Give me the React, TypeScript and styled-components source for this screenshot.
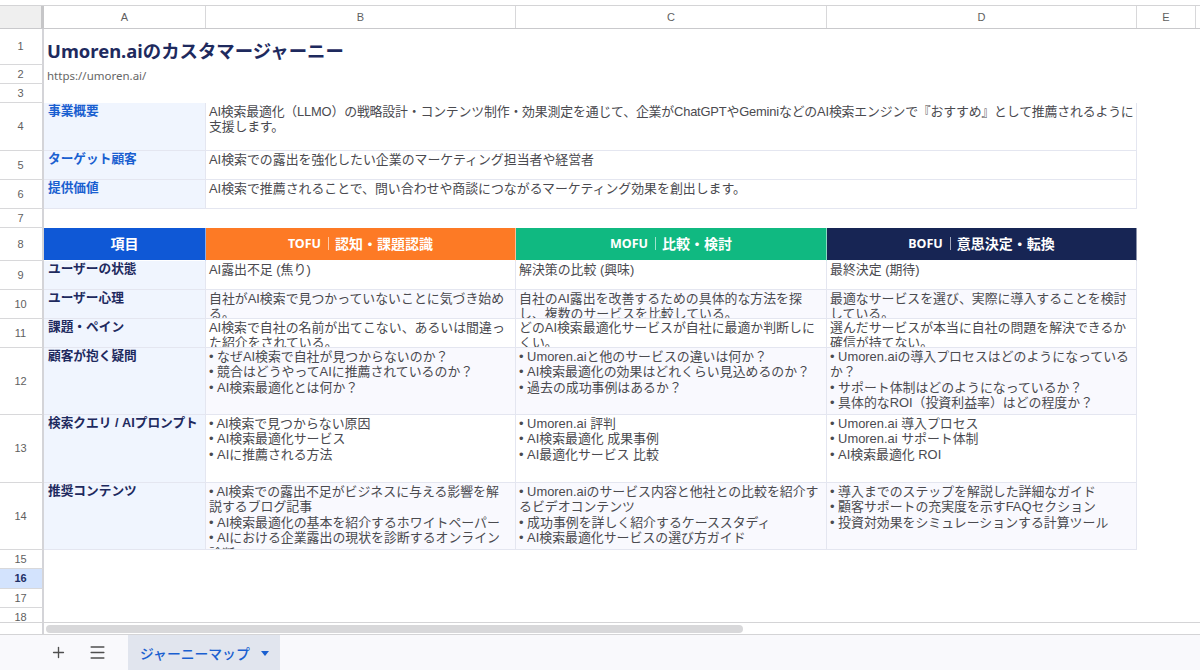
import { Plus, Menu } from 'lucide-react';
import styled, { createGlobalStyle } from 'styled-components';

const COLUMNS = '44px 162px 310px 311px 310px 59px 1fr';

const GlobalStyle = createGlobalStyle`
	html,
	body {
		margin: 0;
		padding: 0;
		background: #fff;
	}
	* {
		box-sizing: border-box;
	}
`;

type RowData = {
	num: number;
	label: string;
	cells: string[];
	height: number;
	tint?: boolean;
	tight?: boolean;
};

const topRows: RowData[] = [
	{
		num: 4,
		label: '事業概要',
		cells: [
			'AI検索最適化（LLMO）の戦略設計・コンテンツ制作・効果測定を通じて、企業がChatGPTやGeminiなどのAI検索エンジンで『おすすめ』として推薦されるように支援します。',
		],
		height: 48,
		tight: true,
	},
	{
		num: 5,
		label: 'ターゲット顧客',
		cells: ['AI検索での露出を強化したい企業のマーケティング担当者や経営者'],
		height: 29,
	},
	{
		num: 6,
		label: '提供価値',
		cells: ['AI検索で推薦されることで、問い合わせや商談につながるマーケティング効果を創出します。'],
		height: 29,
	},
];

const stages = [
	{ name: 'TOFU', title: '認知・課題認識', color: '#fd7a25' },
	{ name: 'MOFU', title: '比較・検討', color: '#10b981' },
	{ name: 'BOFU', title: '意思決定・転換', color: '#172554' },
];

const mapRows: RowData[] = [
	{
		num: 9,
		label: 'ユーザーの状態',
		cells: ['AI露出不足 (焦り)', '解決策の比較 (興味)', '最終決定 (期待)'],
		height: 29,
	},
	{
		num: 10,
		label: 'ユーザー心理',
		cells: [
			'自社がAI検索で見つかっていないことに気づき始める。',
			'自社のAI露出を改善するための具体的な方法を探し、複数のサービスを比較している。',
			'最適なサービスを選び、実際に導入することを検討している。',
		],
		height: 29,
		tint: true,
	},
	{
		num: 11,
		label: '課題・ペイン',
		cells: [
			'AI検索で自社の名前が出てこない、あるいは間違った紹介をされている。',
			'どのAI検索最適化サービスが自社に最適か判断しにくい。',
			'選んだサービスが本当に自社の問題を解決できるか確信が持てない。',
		],
		height: 29,
	},
	{
		num: 12,
		label: '顧客が抱く疑問',
		cells: [
			'• なぜAI検索で自社が見つからないのか？\n• 競合はどうやってAIに推薦されているのか？\n• AI検索最適化とは何か？',
			'• Umoren.aiと他のサービスの違いは何か？\n• AI検索最適化の効果はどれくらい見込めるのか？\n• 過去の成功事例はあるか？',
			'• Umoren.aiの導入プロセスはどのようになっているか？\n• サポート体制はどのようになっているか？\n• 具体的なROI（投資利益率）はどの程度か？',
		],
		height: 67,
		tint: true,
	},
	{
		num: 13,
		label: '検索クエリ / AIプロンプト',
		cells: [
			'• AI検索で見つからない原因\n• AI検索最適化サービス\n• AIに推薦される方法',
			'• Umoren.ai 評判\n• AI検索最適化 成果事例\n• AI最適化サービス 比較',
			'• Umoren.ai 導入プロセス\n• Umoren.ai サポート体制\n• AI検索最適化 ROI',
		],
		height: 68,
	},
	{
		num: 14,
		label: '推奨コンテンツ',
		cells: [
			'• AI検索での露出不足がビジネスに与える影響を解説するブログ記事\n• AI検索最適化の基本を紹介するホワイトペーパー\n• AIにおける企業露出の現状を診断するオンライン診断ツール',
			'• Umoren.aiのサービス内容と他社との比較を紹介するビデオコンテンツ\n• 成功事例を詳しく紹介するケーススタディ\n• AI検索最適化サービスの選び方ガイド',
			'• 導入までのステップを解説した詳細なガイド\n• 顧客サポートの充実度を示すFAQセクション\n• 投資対効果をシミュレーションする計算ツール',
		],
		height: 67,
		tint: true,
	},
];

export default function App() {
	return (
		<Page>
			<GlobalStyle />
			<TopStrip />
			<ColumnHeader>
				<Corner />
				{['A', 'B', 'C', 'D', 'E'].map((c) => (
					<ColumnName key={c}>{c}</ColumnName>
				))}
			</ColumnHeader>

			<Sheet>
				<Row $height={36}>
					<RowNumber>1</RowNumber>
					<Title>Umoren.aiのカスタマージャーニー</Title>
				</Row>
				<Row $height={19}>
					<RowNumber>2</RowNumber>
					<Url>https://umoren.ai/</Url>
				</Row>
				<Row $height={19}>
					<RowNumber>3</RowNumber>
				</Row>

				{topRows.map((row) => (
					<Row key={row.num} $height={row.height}>
						<RowNumber>{row.num}</RowNumber>
						<LabelCell $blue>{row.label}</LabelCell>
						<TextCell $span={3} $tight={row.tight}>
							{row.cells[0]}
						</TextCell>
					</Row>
				))}

				<Row $height={19}>
					<RowNumber>7</RowNumber>
				</Row>

				<Row $height={33}>
					<RowNumber>8</RowNumber>
					<HeadCell $color="#0f58d6">項目</HeadCell>
					{stages.map((stage) => (
						<HeadCell key={stage.name} $color={stage.color}>
							<StageName>{stage.name}</StageName>
							<StageBar />
							{stage.title}
						</HeadCell>
					))}
				</Row>

				{mapRows.map((row) => (
					<Row key={row.num} $height={row.height}>
						<RowNumber>{row.num}</RowNumber>
						<LabelCell>{row.label}</LabelCell>
						{row.cells.map((text, i) => (
							<TextCell key={i} $tint={row.tint}>
								{text}
							</TextCell>
						))}
					</Row>
				))}

				<Row $height={19}>
					<RowNumber>15</RowNumber>
				</Row>
				<Row $height={20}>
					<RowNumber $active>16</RowNumber>
				</Row>
				<Row $height={19}>
					<RowNumber>17</RowNumber>
				</Row>
				<Row $height={19}>
					<RowNumber>18</RowNumber>
				</Row>
			</Sheet>

			<ScrollRow>
				<ScrollGutter />
				<ScrollThumb />
			</ScrollRow>

			<TabBar>
				<TabIcon>
					<Plus size={17} strokeWidth={1.9} />
				</TabIcon>
				<TabIcon>
					<Menu size={19} strokeWidth={1.9} />
				</TabIcon>
				<Tab>
					ジャーニーマップ
					<Caret width="8" height="5" viewBox="0 0 8 5">
						<path d="M0 0h8L4 5z" fill="#1a5fd0" />
					</Caret>
				</Tab>
			</TabBar>
		</Page>
	);
}

const Page = styled.div`
	width: 1200px;
	height: 670px;
	overflow: hidden;
	display: flex;
	flex-direction: column;
	background: #fff;
	font-family: 'Liberation Sans', 'Noto Sans CJK JP', sans-serif;
`;

const TopStrip = styled.div`
	flex: none;
	height: 6px;
	border-bottom: 1px solid #d4d4d6;
`;

const ColumnHeader = styled.div`
	flex: none;
	display: grid;
	grid-template-columns: ${COLUMNS};
	height: 23px;
	border-bottom: 1px solid #c9c9cc;
`;

const Corner = styled.div`
	background: #efefef;
	border-right: 3px solid #c6c6c8;
`;

const ColumnName = styled.div`
	display: flex;
	align-items: center;
	justify-content: center;
	font-family: 'Liberation Sans', sans-serif;
	font-size: 11px;
	color: #5f5f5f;
	border-right: 1px solid #d8d8da;
`;

const Sheet = styled.div`
	flex: 1;
	min-height: 0;
	overflow: hidden;
`;

const Row = styled.div<{ $height: number }>`
	display: grid;
	grid-template-columns: ${COLUMNS};
	height: ${(p) => p.$height}px;
	overflow: hidden;
`;

const RowNumber = styled.div<{ $active?: boolean }>`
	grid-column: 1;
	display: flex;
	align-items: center;
	justify-content: center;
	padding: 0 1px 1px 0;
	font-family: 'Liberation Sans', sans-serif;
	font-size: 11px;
	font-weight: ${(p) => (p.$active ? 700 : 400)};
	color: ${(p) => (p.$active ? '#1e2f66' : '#5f5f5f')};
	background: ${(p) => (p.$active ? '#d3e3fd' : '#fff')};
	border-bottom: 1px solid #d8d8da;
	border-right: 2px solid #d4d4d8;
`;

const Title = styled.div`
	grid-column: 2 / span 3;
	align-self: end;
	padding: 0 0 1px 3px;
	font-family: 'Noto Sans', 'Noto Sans CJK JP', sans-serif;
	font-size: 18.4px;
	line-height: 26px;
	font-weight: 700;
	color: #1e2a5e;
	white-space: nowrap;
`;

const Url = styled.div`
	grid-column: 2 / span 2;
	padding: 3px 0 0 3px;
	font-family: 'Noto Sans', sans-serif;
	font-size: 11.5px;
	line-height: 16px;
	color: #666;
`;

const LabelCell = styled.div<{ $blue?: boolean }>`
	padding: 0.5px 3px 0 4px;
	font-size: 12.7px;
	line-height: 15.5px;
	font-weight: 700;
	white-space: nowrap;
	overflow: hidden;
	color: ${(p) => (p.$blue ? '#1a5fd0' : '#1e2a5e')};
	background: #f0f5fe;
	border-right: 1px solid #e4e6f0;
	border-bottom: 1px solid #e4e6f0;
`;

const TextCell = styled.div<{ $span?: number; $tint?: boolean; $tight?: boolean }>`
	grid-column: span ${(p) => p.$span ?? 1};
	padding: 0.5px ${(p) => (p.$tight ? 1 : 5)}px 0 3px;
	font-size: 12.9px;
	line-height: 15.5px;
	letter-spacing: ${(p) => (p.$tight ? '-0.18px' : '0')};
	color: #4a4a4f;
	white-space: pre-line;
	overflow: hidden;
	background: ${(p) => (p.$tint ? '#f9f9fe' : '#fff')};
	border-right: 1px solid #e4e6f0;
	border-bottom: 1px solid #e4e6f0;
`;

const HeadCell = styled.div<{ $color: string }>`
	display: flex;
	align-items: center;
	justify-content: center;
	padding-bottom: 2px;
	font-size: 14px;
	font-weight: 700;
	color: #fff;
	background: ${(p) => p.$color};
	border-right: 1px solid rgba(255, 255, 255, 0.5);
	border-bottom: 1px solid #fff;
`;

const StageName = styled.span`
	font-family: 'Noto Sans', sans-serif;
	font-size: 12.5px;
`;

const StageBar = styled.span`
	width: 1px;
	height: 13px;
	margin: 0 6px 0 7px;
	background: rgba(255, 255, 255, 0.6);
`;

const ScrollRow = styled.div`
	flex: none;
	display: flex;
	align-items: center;
	height: 13px;
	border-top: 1px solid #d4d4d6;
	border-bottom: 1px solid #d4d4d6;
`;

const ScrollGutter = styled.div`
	width: 44px;
	height: 100%;
	border-right: 2px solid #d4d4d8;
`;

const ScrollThumb = styled.div`
	width: 697px;
	height: 8px;
	margin-left: 2px;
	border-radius: 4px;
	background: #d8d8da;
`;

const TabBar = styled.div`
	flex: none;
	height: 35px;
	display: flex;
	align-items: stretch;
	padding-left: 39px;
	background: #f9f9fc;
`;

const TabIcon = styled.div`
	width: 39px;
	display: flex;
	align-items: center;
	justify-content: center;
	color: #4f4f4f;
`;

const Tab = styled.div`
	margin-left: 11px;
	width: 152px;
	display: flex;
	align-items: center;
	gap: 11px;
	padding-left: 12px;
	font-size: 13.8px;
	font-weight: 500;
	color: #1a5fd0;
	background: #e1e5ee;
`;

const Caret = styled.svg`
	margin-top: 2px;
`;
